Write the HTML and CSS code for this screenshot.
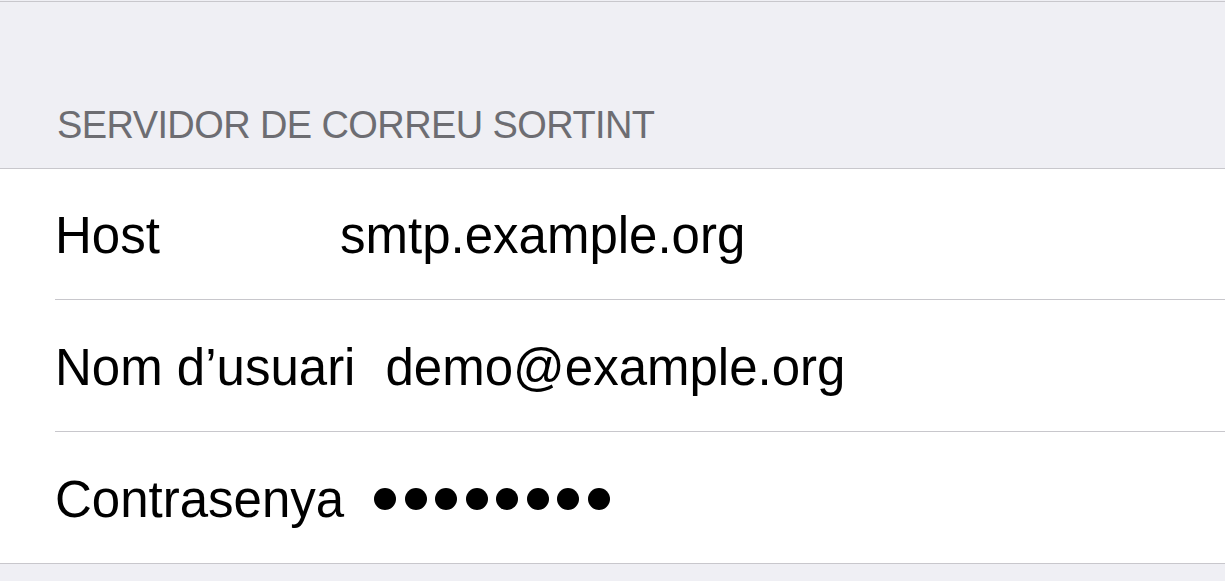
FILE: index.html
```html
<!DOCTYPE html>
<html lang="ca">
<head>
<meta charset="utf-8">
<title>Servidor de correu sortint</title>
<link rel="stylesheet" href="styles.css">
</head>
<body>
  <div class="page">
    <div class="group-header">SERVIDOR DE CORREU SORTINT</div>
    <div class="group">
      <div class="row">
        <div class="row-inner">
          <span class="label">Host</span>
          <span class="value">smtp.example.org</span>
        </div>
      </div>
      <div class="row">
        <div class="row-inner">
          <span class="label">Nom d’usuari</span>
          <span class="value">demo@example.org</span>
        </div>
      </div>
      <div class="row">
        <div class="row-inner last">
          <span class="label">Contrasenya</span>
          <span class="value dots" aria-label="contrasenya oculta">
            <i></i><i></i><i></i><i></i><i></i><i></i><i></i><i></i>
          </span>
        </div>
      </div>
    </div>
  </div>
</body>
</html>
```

FILE: styles.css
```css
html, body {
  margin: 0;
  padding: 0;
  background: #efeff4;
  font-family: "Liberation Sans", Arial, Helvetica, sans-serif;
}

.page {
  padding-top: 1px;
  height: 580px;
  overflow: hidden;
}

.group-header {
  border-top: 1px solid #c8c7cc;
  height: 167px;
  box-sizing: border-box;
  padding: 104px 0 0 57px;
  font-size: 38px;
  line-height: 38px;
  letter-spacing: -0.6px;
  color: #6d6d72;
}

.group {
  background: #ffffff;
  border-top: 1px solid #c8c7cc;
  border-bottom: 1px solid #c8c7cc;
}

.row {
  padding-left: 55px;
}

.row-inner {
  display: flex;
  align-items: flex-start;
  gap: 30px;
  height: 132px;
  box-sizing: border-box;
  padding-top: 43px;
  border-bottom: 1px solid #c8c7cc;
  font-size: 51px;
  line-height: 50px;
  color: #000000;
}

.row:first-child .row-inner {
  height: 131px;
  padding-top: 42px;
}

.row-inner.last {
  border-bottom: none;
  height: 131px;
}

.label {
  min-width: 255px;
  white-space: nowrap;
}

.value {
  white-space: nowrap;
}

.dots {
  display: flex;
  gap: 8.5px;
  padding-top: 13px;
}

.dots i {
  display: block;
  width: 22px;
  height: 22px;
  border-radius: 50%;
  background: #000000;
}
```
